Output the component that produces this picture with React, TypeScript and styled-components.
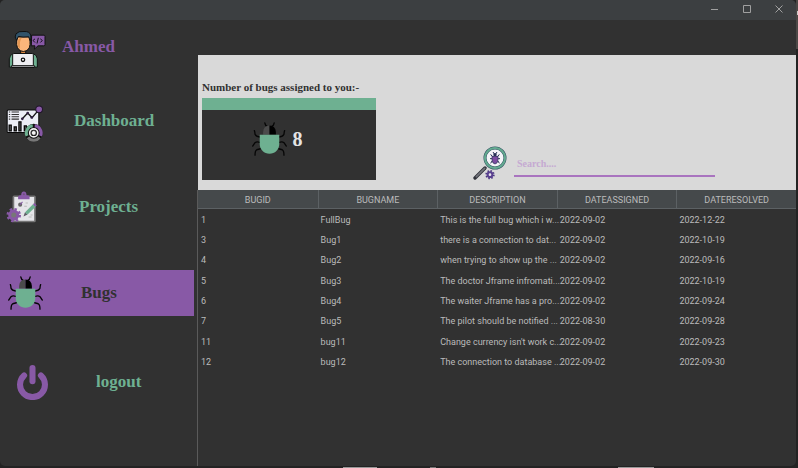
import React from 'react';
import styled, { createGlobalStyle } from 'styled-components';

const purple = '#8859a6';
const green = '#6eb091';
const dark = '#313131';
const serif = '"Liberation Serif", "Times New Roman", serif';
const sans = 'Roboto, "Open Sans", sans-serif';

const GlobalStyle = createGlobalStyle`
  * { box-sizing: border-box; }
  body { margin: 0; background: #232323; }
  button, input { font: inherit; }
`;

const Desktop = styled.div`
  min-height: 100vh;
  display: flex;
  padding: 0 2px 2px 0;
  background:
    linear-gradient(#c8c8c8, #c8c8c8) right 11px / 1px 4px no-repeat,
    linear-gradient(#4c4846, #4c4846) right top / 2px 49px no-repeat,
    linear-gradient(90deg, transparent 343px, #999 343px 377px, transparent 377px 430px, #777 430px 436px, transparent 436px 618px, #999 618px 654px, transparent 654px) left bottom / 100% 1px no-repeat,
    #232323;
`;

const Window = styled.div`
  flex: 1;
  min-width: 0;
  display: flex;
  flex-direction: column;
  background: ${dark};
  border-radius: 5px;
  overflow: hidden;
`;

const TitleBar = styled.header`
  height: 20px;
  display: flex;
  justify-content: flex-end;
  align-items: center;
  gap: 16px;
  padding: 0 9px 2px 0;
  background: #3c3f41;
`;

const WindowButton = styled.button`
  width: 16px;
  height: 16px;
  padding: 0;
  border: 0;
  background: none;
  color: #a0a0a0;

  svg { display: block; }
`;

const Body = styled.div`
  flex: 1;
  display: flex;
`;

const Sidebar = styled.nav`
  width: 198px;
  flex: none;
  display: flex;
  flex-direction: column;
  padding: 6px 4px 0 0;
`;

const NavItem = styled.a<{ $top?: number; $start: number; $label: number; $raised?: boolean; $active?: boolean; $color?: string }>`
  height: 46px;
  margin-top: ${p => p.$top ?? 0}px;
  padding: 0 0 0 ${p => p.$start}px;
  display: grid;
  grid-template-columns: ${p => p.$label - p.$start}px 1fr;
  align-items: center;
  border: 0;
  text-align: left;
  text-decoration: none;
  background: ${p => (p.$active ? purple : 'transparent')};
  color: ${p => p.$color ?? green};
  font: bold 17px/20px ${serif};
  cursor: pointer;

  svg { display: block; }
  span { padding-bottom: ${p => (p.$raised ? 4 : 0)}px; }
`;

const Main = styled.main`
  flex: 1;
  min-width: 0;
  display: flex;
  flex-direction: column;
  padding-top: 35px;
`;

const Overview = styled.section`
  display: flex;
  align-items: flex-end;
  justify-content: space-between;
  gap: 97px;
  padding: 25px 81px 10px 4px;
  background: #d9d9d9;
`;

const Summary = styled.div`
  width: 174px;
  flex: none;
`;

const SummaryTitle = styled.h2`
  margin: 0 0 4px;
  color: ${dark};
  font: bold 11px/14px ${serif};
  white-space: nowrap;
`;

const CountCard = styled.div`
  border-top: 12px solid ${green};
  height: 82px;
  display: flex;
  justify-content: center;
  align-items: center;
  gap: 6px;
  padding: 0 24px 12px 0;
  background: ${dark};
  color: #e4e4e4;
  font: bold 20px/24px ${serif};

  svg { display: block; }
`;

const SearchBox = styled.label`
  flex: 1;
  display: flex;
  align-items: center;
  gap: 7px;

  svg { flex: none; }
`;

const SearchInput = styled.input`
  flex: 1;
  min-width: 0;
  height: 25px;
  margin-top: 2px;
  padding: 0 3px;
  border: 0;
  border-bottom: 2px solid #a974bf;
  outline: 0;
  background: transparent;
  color: ${purple};
  font: bold 10px/14px ${serif};

  &::placeholder { color: #c5a9d2; opacity: 1; }
`;

const TableArea = styled.section`
  flex: 1;
  margin-left: -1px;
  border-left: 1px solid #5a5a5a;
`;

const BugTable = styled.table`
  width: 100%;
  table-layout: fixed;
  border-collapse: separate;
  border-spacing: 0;
  font: 9px/12px ${sans};
  color: #bbb;
`;

const HeadCell = styled.th`
  height: 19px;
  padding: 2px 0 0;
  border-bottom: 1px solid #5c6164;
  border-left: 1px solid #5c6164;
  background: #45494b;
  font-weight: 400;

  &:first-child { border-left: 0; }
`;

const Row = styled.tr`
  height: 20px;

  &:nth-child(3n + 1) { height: 21px; }
`;

const Cell = styled.td`
  padding: 0 0 0 3px;
  white-space: nowrap;
`;

const BugIcon = () => (
  <svg width="35" height="34" viewBox="0 0 104 100" fill="none" aria-hidden="true">
    <g stroke="#060606" strokeWidth="4" strokeLinecap="round" strokeLinejoin="round">
      <path d="M38 2Q39 10 46 13M66 2Q65 10 58 13" />
      <path d="M7 25Q9 31 9 36Q12 43 23 44M97 25Q95 31 95 36Q92 43 81 44" />
      <path d="M2 71L9 61Q14 57 23 60M102 71L95 61Q90 57 81 60" />
      <path d="M9 98Q9 84 14 82L25 79M95 98Q95 84 90 82L79 79" />
    </g>
    <path d="M33 37V29Q34 11 52 10V37Z" fill="#4b4b4b" />
    <path d="M71 37V29Q70 11 52 10V37Z" fill="#000" />
    <path d="M23 37H81V65C81 82 68 94 52 94S23 82 23 65Z" fill={green} />
  </svg>
);

const ProfileIcon = () => (
  <svg width="38" height="39" viewBox="0 0 114 116" aria-hidden="true">
    <g stroke="#111" strokeWidth="3" strokeLinejoin="round">
      <path d="M71 15H108Q111 15 111 19V43Q111 47 107 47H90L79 57L81 47H70Z" fill={purple} />
      <path d="M38 51H53V70H38Z" fill="#d7843e" />
      <path d="M4 111V86Q5 73 17 70H75Q87 74 88 86V111Z" fill={green} />
      <path d="M26 20H66V43Q65 62 46 64Q28 62 26 43Z" fill="#fbb57b" />
      <path d="M26 31Q18 20 24 11Q31 2 48 4Q65 3 68 15Q71 24 66 31L62 20Q44 22 31 19Z" fill="#31536a" />
      <path d="M17 70H73Q76 70 76 74V107H14V74Q14 70 17 70Z" fill="#eeeef2" />
      <path d="M10 107H80V112H10Z" fill="#cfd1d6" />
      <circle cx="45" cy="89" r="5" fill="#fff" strokeWidth="4" />
    </g>
    <path d="M31 28Q36 23 41 24Q34 30 36 56Q28 50 29 39Z" fill="#e59650" />
    <path d="M81 26L75 31L81 37M97 26L103 31L97 37M91 23L87 40" fill="none" stroke="#15101a" strokeWidth="3" />
  </svg>
);

const DashboardIcon = () => (
  <svg width="38" height="37" viewBox="0 0 112 110" aria-hidden="true">
    <rect x="3" y="15" width="94" height="67" rx="3" fill="#eceef6" stroke="#080808" strokeWidth="3" />
    <path d="M8 21H12M16 21H38M8 28H12M16 28H38M8 35H12M16 35H38M8 42H12M16 42H38" stroke="#333" strokeWidth="3" />
    <g fill="#777" stroke="#080808" strokeWidth="4">
      <path d="M9 60H15V77H9ZM24 65H30V77H24ZM38 50H44V77H38ZM54 62H60V77H54Z" />
    </g>
    <path d="M48 41L64 24L77 38L98 13" fill="none" stroke="#151515" strokeWidth="4" />
    <circle cx="48" cy="41" r="4" fill="#301f42" />
    <circle cx="64" cy="24" r="4" fill="#301f42" />
    <circle cx="76" cy="37" r="4" fill="#301f42" />
    <circle cx="98" cy="13" r="10" fill={purple} stroke="#20152a" strokeWidth="3" />
    <circle cx="82" cy="83" r="27" fill="#111" />
    <g fill="none" strokeWidth="9">
      <path d="M62 92A21 21 0 0 1 79 62" stroke={green} />
      <path d="M85 62A21 21 0 0 1 102 92" stroke={purple} />
      <path d="M99 96A21 21 0 0 1 65 96" stroke="#777" />
      <circle cx="82" cy="83" r="12" stroke="#f0f0f0" strokeWidth="5" />
    </g>
    <circle cx="82" cy="83" r="7" fill="#f5f5f5" stroke="#222" strokeWidth="2" />
  </svg>
);

const ProjectsIcon = () => (
  <svg width="31" height="32" viewBox="0 0 92 94" aria-hidden="true">
    <rect x="22" y="15" width="64" height="75" rx="2" fill="#e5e5e9" stroke="#757575" strokeWidth="5" />
    <path d="M36 24V16Q37 12 45 12Q45 2 53 1Q61 2 61 12Q69 12 70 16V24Z" fill={purple} />
    <circle cx="53" cy="9" r="3" fill="#6f507e" />
    <circle cx="42" cy="40" r="6" fill="#666" />
    <path d="M42 40L49 32" stroke={purple} strokeWidth="3" />
    <path d="M58 35H65M54 45H62M67 77H76M73 71H79" stroke="#bbb" strokeWidth="3" />
    <path d="M56 63L80 39L88 46L64 69Z" fill={green} />
    <path d="M80 39L84 35L91 42L87 46Z" fill={purple} />
    <path d="M56 63L64 69L52 75Z" fill="#5d5d66" />
    <circle cx="23" cy="71" r="17" fill="none" stroke={purple} strokeWidth="9" strokeDasharray="6.7 6.65" />
    <circle cx="23" cy="71" r="12" fill="#777" stroke={purple} strokeWidth="9" />
  </svg>
);

const PowerIcon = () => (
  <svg width="31" height="35" viewBox="0 0 92 104" fill="none" stroke={purple} strokeWidth="18" strokeLinecap="round" aria-hidden="true">
    <path d="M21 31A37 37 0 1 0 71 31" />
    <path d="M46 9V48" />
  </svg>
);

const SearchBugIcon = () => (
  <svg width="34" height="34" viewBox="0 0 102 102" aria-hidden="true">
    <path d="M36 66L6 96" stroke="#30323a" strokeWidth="10" strokeLinecap="round" />
    <path d="M35 67L10 92" stroke="#73747c" strokeWidth="5" strokeLinecap="round" />
    <circle cx="66" cy="36" r="30" fill="#f4f4f8" stroke="#304f61" strokeWidth="9" />
    <circle cx="66" cy="36" r="30" fill="none" stroke="#64aa90" strokeWidth="6" />
    <path d="M60 18L64 24M72 18L68 24M53 25L57 31L65 33M79 25L75 31L67 33M51 38H81M53 52L57 45M79 52L75 45" fill="none" stroke="#293157" strokeWidth="3" />
    <circle cx="66" cy="26" r="5" fill="#293157" />
    <path d="M57 31H75V42Q74 53 66 54Q58 53 57 42Z" fill="#7b4ba0" stroke="#293157" strokeWidth="2" />
    <circle cx="51" cy="86" r="11" fill="none" stroke="#49367f" strokeWidth="6" strokeDasharray="4.3 4.34" />
    <circle cx="51" cy="86" r="7" fill="#e8e5ee" stroke="#59408f" strokeWidth="6" />
  </svg>
);

const columns = ['BUGID', 'BUGNAME', 'DESCRIPTION', 'DATEASSIGNED', 'DATERESOLVED'];

const bugs = [
  ['1', 'FullBug', 'This is the full bug which i w...', '2022-09-02', '2022-12-22'],
  ['3', 'Bug1', 'there is a connection to dat...', '2022-09-02', '2022-10-19'],
  ['4', 'Bug2', 'when trying to show up the ...', '2022-09-02', '2022-09-16'],
  ['5', 'Bug3', 'The doctor Jframe infromati...', '2022-09-02', '2022-10-19'],
  ['6', 'Bug4', 'The waiter Jframe has a pro...', '2022-09-02', '2022-09-24'],
  ['7', 'Bug5', 'The pilot should be notified ...', '2022-08-30', '2022-09-28'],
  ['11', 'bug11', "Change currency isn't work c...", '2022-09-02', '2022-09-23'],
  ['12', 'bug12', 'The connection to database ...', '2022-09-02', '2022-09-30'],
];

export default function App() {
  return (
    <>
      <GlobalStyle />
      <Desktop>
        <Window>
          <TitleBar>
            <WindowButton aria-label="Minimize">
              <svg width="16" height="16" stroke="currentColor"><path d="M4 8.5H11" /></svg>
            </WindowButton>
            <WindowButton aria-label="Maximize">
              <svg width="16" height="16" fill="none" stroke="currentColor"><path d="M4.500 4.500H11.500V11.500H4.500Z" /></svg>
            </WindowButton>
            <WindowButton aria-label="Close">
              <svg width="16" height="16" stroke="currentColor"><path d="M4.500 4.500L11.500 11.500M11.500 4.500L4.500 11.500" /></svg>
            </WindowButton>
          </TitleBar>
          <Body>
            <Sidebar>
              <NavItem href="#profile" $start={8} $label={62} $raised $color={purple}><ProfileIcon /><span>Ahmed</span></NavItem>
              <NavItem href="#dashboard" $top={28} $start={6} $label={74} $raised><DashboardIcon /><span>Dashboard</span></NavItem>
              <NavItem href="#projects" $top={38} $start={6} $label={79}><ProjectsIcon /><span>Projects</span></NavItem>
              <NavItem href="#bugs" $top={40} $start={8} $label={81} $active $color={dark}><BugIcon /><span>Bugs</span></NavItem>
              <NavItem as="button" $top={43} $start={17} $label={96}><PowerIcon /><span>logout</span></NavItem>
            </Sidebar>
            <Main>
              <Overview>
                <Summary>
                  <SummaryTitle>Number of bugs assigned to you:-</SummaryTitle>
                  <CountCard><BugIcon /><span>8</span></CountCard>
                </Summary>
                <SearchBox>
                  <SearchBugIcon />
                  <SearchInput type="text" aria-label="Search bugs" placeholder="Search...." />
                </SearchBox>
              </Overview>
              <TableArea>
                <BugTable>
                  <thead>
                    <tr>{columns.map(c => <HeadCell key={c} scope="col">{c}</HeadCell>)}</tr>
                  </thead>
                  <tbody>
                    {bugs.map(bug => (
                      <Row key={bug[0]}>{bug.map((value, i) => <Cell key={columns[i]}>{value}</Cell>)}</Row>
                    ))}
                  </tbody>
                </BugTable>
              </TableArea>
            </Main>
          </Body>
        </Window>
      </Desktop>
    </>
  );
}
